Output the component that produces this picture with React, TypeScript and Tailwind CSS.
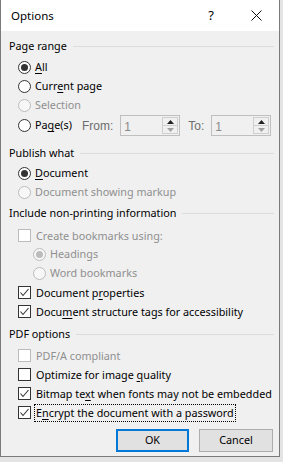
import React from 'react';

const FONT = { fontFamily: '"Noto Sans", "Segoe UI", sans-serif' };

type ItemProps = {
  label: React.ReactNode;
  checked?: boolean;
  disabled?: boolean;
  indent?: boolean;
  focus?: boolean;
};

function Radio({ label, checked, disabled, indent }: ItemProps) {
  const ring = disabled ? 'border-[#bcbcbc] bg-[#f7f7f7]' : 'border-[#333333] bg-white';
  const dot = disabled ? 'bg-[#bcbcbc]' : 'bg-[#333333]';
  return (
    <div className={`flex h-[19px] items-center whitespace-nowrap ${indent ? 'pl-[24px]' : 'pl-[9px]'}`}>
      <span className={`flex h-[13px] w-[13px] shrink-0 items-center justify-center rounded-full border ${ring}`}>
        {checked && <span className={`h-[7px] w-[7px] rounded-full ${dot}`} />}
      </span>
      <span className={`ml-[4px] ${disabled ? 'text-[#8f8f8f]' : 'text-black'}`}>{label}</span>
    </div>
  );
}

function Check({ label, checked, disabled, focus }: ItemProps) {
  const box = disabled ? 'border-[#bcbcbc]' : 'border-[#333333]';
  return (
    <div className="flex h-[19px] items-center whitespace-nowrap pl-[9px]">
      <span className={`flex h-[13px] w-[13px] shrink-0 items-center justify-center border bg-white ${box}`}>
        {checked && (
          <svg width="11" height="11" viewBox="0 0 11 11">
            <path d="M1.5 5.5 L4 8.5 L9.5 2" fill="none" stroke="#333333" strokeWidth="1.1" />
          </svg>
        )}
      </span>
      <span
        className={`ml-[3px] px-[1px] leading-[16px] ${disabled ? 'text-[#8f8f8f]' : 'text-black'} ${focus ? 'border border-dotted border-black' : 'border border-transparent'}`}
      >
        {label}
      </span>
    </div>
  );
}

function Group({ title, className = '' }: { title: string; className?: string }) {
  return (
    <div className={`flex h-[20px] items-center whitespace-nowrap pr-[5px] ${className}`}>
      <span className="text-black">{title}</span>
      <span className="ml-[6px] h-px flex-1 bg-[#dcdcdc]" />
    </div>
  );
}

function Spin() {
  return (
    <div className="flex h-[21px] w-[60px] items-stretch border border-[#bfbfbf] bg-[#f0f0f0]">
      <span className="flex-1 pl-[3px] pt-[2px] text-[#8a8a8a]" style={{ fontFamily: '"Liberation Sans", sans-serif', fontSize: 12 }}>1</span>
      <span className="my-[1px] mr-[1px] flex w-[16px] flex-col border border-[#cfcfcf] bg-[#f0f0f0]">
        <span className="flex flex-1 items-center justify-center border-b border-[#cfcfcf]">
          <svg width="7" height="4" viewBox="0 0 7 4"><path d="M0 4 L3.5 0 L7 4 Z" fill="#222222" /></svg>
        </span>
        <span className="flex flex-1 items-center justify-center">
          <svg width="7" height="4" viewBox="0 0 7 4"><path d="M0 0 L3.5 4 L7 0 Z" fill="#a0a0a0" /></svg>
        </span>
      </span>
    </div>
  );
}

const U = ({ children }: { children: React.ReactNode }) => <span className="underline underline-offset-2">{children}</span>;

export default function App() {
  return (
    <div className="h-[462px] w-[283px] overflow-hidden bg-[#e4e4e4] text-[10.8px]" style={FONT}>
      <div className="flex h-[457px] w-[280px] flex-col border-b border-l border-r border-[#7a7a7a] bg-[#f0f0f0]">
        {/* Title bar */}
        <div className="flex h-[31px] items-center bg-white pl-[10px]">
          <span className="flex-1 text-[11.5px] text-black">Options</span>
          <span className="mr-[37px] text-[13px] text-black">?</span>
          <svg className="mr-[17px]" width="11" height="11" viewBox="0 0 11 11">
            <path d="M0.5 0.5 L10.5 10.5 M10.5 0.5 L0.5 10.5" stroke="#111111" strokeWidth="1" />
          </svg>
        </div>

        {/* Body */}
        <div className="flex flex-col pl-[8px] pt-[5px]">
          <Group title="Page range" />
          <div className="mt-[2px]">
            <Radio checked label={<><U>A</U>ll</>} />
            <Radio label={<>Curr<U>e</U>nt page</>} />
            <Radio disabled label="Selection" />
            <div className="flex h-[21px] items-center whitespace-nowrap pl-[9px]">
              <span className="flex h-[13px] w-[13px] rounded-full border border-[#333333] bg-white" />
              <span className="ml-[4px] text-black">Pa<U>g</U>e(s)</span>
              <span className="ml-[10px] text-[#6d6d6d]" style={{ fontFamily: '"Liberation Sans", sans-serif', fontSize: 12 }}>From:</span>
              <span className="ml-[7px]"><Spin /></span>
              <span className="ml-[8px] text-[#6d6d6d]" style={{ fontFamily: '"Liberation Sans", sans-serif', fontSize: 12 }}>To:</span>
              <span className="ml-[7px]"><Spin /></span>
            </div>
          </div>

          <Group title="Publish what" className="mt-[7px]" />
          <div className="mt-[1px]">
            <Radio checked label={<><U>D</U>ocument</>} />
            <Radio disabled label="Document showing markup" />
          </div>

          <Group title="Include non-printing information" className="mt-[1px]" />
          <div className="mt-[3px]">
            <Check disabled label="Create bookmarks using:" />
            <Radio indent disabled checked label="Headings" />
            <Radio indent disabled label="Word bookmarks" />
            <Check checked label={<>Document p<U>r</U>operties</>} />
            <Check checked label={<>Docu<U>m</U>ent structure tags for accessibility</>} />
          </div>

          <Group title="PDF options" className="mt-[3px]" />
          <div className="mt-[2px]">
            <Check disabled label="PDF/A compliant" />
            <Check label={<>Optimize for image <U>q</U>uality</>} />
            <Check checked label={<>Bitmap te<U>x</U>t when fonts may not be embedded</>} />
            <Check checked focus label={<>E<U>n</U>crypt the document with a password</>} />
          </div>

          <div className="mt-[7px] flex justify-end pr-[6px]">
            <button className="h-[23px] w-[73px] border-2 border-[#0078d7] bg-[#e1e1e1] text-black">OK</button>
            <button className="ml-[10px] h-[23px] w-[74px] border border-[#adadad] bg-[#e1e1e1] text-black">Cancel</button>
          </div>
        </div>
      </div>
    </div>
  );
}
